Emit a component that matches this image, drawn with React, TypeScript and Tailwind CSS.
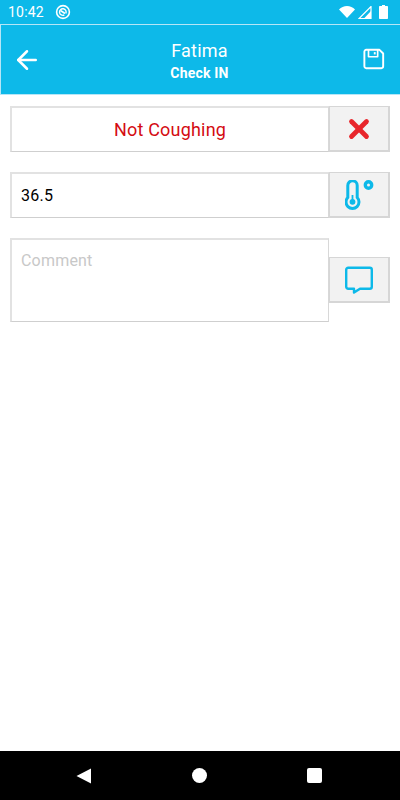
import { ArrowLeft, X } from 'lucide-react';

function ThermometerIcon() {
  return (
    <svg width="30" height="30" viewBox="0 0 30 30" fill="none" stroke="#0db9e9" strokeWidth="3" className="ml-[1px]">
      <path d="M2.800 17.500V5.500a4.700 4.700 0 0 1 9.400 0v12a6.500 6.500 0 1 1-9.400 0z" />
      <circle cx="7.500" cy="21.800" r="2.900" fill="#0db9e9" stroke="none" />
      <path d="M7.500 15v6" strokeWidth="1.800" />
      <circle cx="23.500" cy="5" r="3.200" strokeWidth="3.400" />
    </svg>
  );
}

function StatusIcons() {
  return (
    <div className="flex items-center gap-[2px]">
      <svg width="16" height="12" viewBox="0 0 16 12" fill="white">
        <path d="M0 3.400C2 1.300 5 0 8 0s6 1.300 8 3.400L8 12z" />
      </svg>
      <svg width="14" height="13" viewBox="0 0 14 13" className="ml-[1px]">
        <path d="M13 0.500V12.500H1z" fill="none" stroke="white" strokeWidth="1.200" />
        <path d="M13 5V12.500H6z" fill="white" />
      </svg>
      <svg width="9" height="14" viewBox="0 0 9 14" fill="white" className="ml-[5px]">
        <path d="M3 0h3v1h2.200a.8.8 0 0 1 .8.8v11.400a.8.8 0 0 1-.8.8H.8a.8.8 0 0 1-.8-.8V1.800a.8.8 0 0 1 .8-.8H3z" />
      </svg>
    </div>
  );
}

export default function App() {
  return (
    <div className="w-[400px] h-[800px] flex flex-col bg-white font-['Roboto',sans-serif] overflow-hidden">
      <div className="h-[24px] bg-[#0db9e9] flex items-center justify-between pl-[8px] pr-[12px] text-white">
        <div className="flex items-center gap-[11px]">
          <span className="text-[14px] leading-none tracking-[0.2px]">10:42</span>
          <svg width="16" height="16" viewBox="0 0 16 16" fill="none" stroke="white">
            <circle cx="8" cy="8" r="6.400" strokeWidth="1.600" />
            <path d="M10.800 9.500a3.300 3.300 0 1 0-1.500 1.500" strokeWidth="1.400" />
            <path d="M5.500 6.500l4.500 3" strokeWidth="1.600" />
          </svg>
        </div>
        <StatusIcons />
      </div>

      <div className="h-[71px] bg-[#0db9e9] border-t border-l border-b border-[#b5e6f7] flex items-center justify-between pl-[11px] pr-[15px]">
        <ArrowLeft size={30} color="white" strokeWidth={2} />
        <div className="flex flex-col items-center text-white pt-[2px] pr-[6px]">
          <span className="text-[18px] leading-[24px] tracking-[0.2px]">Fatima</span>
          <span className="text-[14px] leading-[20px] font-bold tracking-[0.2px]">Check IN</span>
        </div>
        <svg width="22" height="22" viewBox="0 0 24 24" fill="none" stroke="white" strokeWidth="2.100" strokeLinejoin="round" className="mb-[1px]">
          <path d="M3.500 2h14.500l4 4v14a2 2 0 0 1-2 2H3.500a2 2 0 0 1-2-2V4a2 2 0 0 1 2-2z" />
          <path d="M6 2v7.500h10V2" strokeWidth="1.800" />
          <path d="M12.800 4.500v2.500" strokeWidth="2" />
        </svg>
      </div>

      <div className="flex-1 flex flex-col gap-[20px] pt-[11px] pl-[10px] pr-[10px]">
        <div className="flex h-[46px]">
          <div className="w-[319px] border-t-2 border-l-2 border-r border-b border-t-[#e2e2e2] border-l-[#e2e2e2] border-r-[#d8d8d8] border-b-[#cfcfcf] flex items-center justify-center text-[18px] tracking-[0.2px] text-[#d40c12]">
            Not Coughing
          </div>
          <div className="w-[61px] bg-[#f2f2f2] border-t border-l border-b-2 border-r-2 border-[#d6d6d6] flex items-center justify-center">
            <X size={30} color="#e8262c" strokeWidth={3.800} />
          </div>
        </div>

        <div className="flex h-[46px]">
          <div className="w-[319px] border-t-2 border-l-2 border-r border-b border-t-[#e2e2e2] border-l-[#e2e2e2] border-r-[#d8d8d8] border-b-[#cfcfcf] flex items-center pl-[9px] pt-[1px] text-[16px] tracking-[0.3px] text-black">
            36.5
          </div>
          <div className="w-[61px] bg-[#f2f2f2] border-t border-l border-b-2 border-r-2 border-[#d6d6d6] flex items-center justify-center">
            <ThermometerIcon />
          </div>
        </div>

        <div className="flex h-[84px] items-center">
          <div className="w-[319px] h-full border-t-2 border-l-2 border-r border-b border-t-[#e2e2e2] border-l-[#e2e2e2] border-r-[#d8d8d8] border-b-[#cfcfcf] pl-[9px] pt-[11px] text-[16px] leading-[20px] tracking-[0.2px] text-[#c8c8c8]">
            Comment
          </div>
          <div className="w-[61px] h-[46px] bg-[#f2f2f2] border-t border-l border-b-2 border-r-2 border-[#d6d6d6] flex items-center justify-center">
            <svg width="28" height="28" viewBox="0 0 28 28" fill="none" stroke="#0db9e9" strokeWidth="2.400" strokeLinejoin="round">
              <path d="M3.200 1.800h21.600a2 2 0 0 1 2 2v17a2 2 0 0 1-2 2H15l-6 3.800v-3.800H3.200a2 2 0 0 1-2-2v-17a2 2 0 0 1 2-2z" />
            </svg>
          </div>
        </div>
      </div>

      <div className="h-[49px] bg-black flex items-center justify-center gap-[100px] pr-[3px]">
        <svg width="16" height="16" viewBox="0 0 16 16" fill="white">
          <path d="M15 0.500V15.500L0.500 8z" />
        </svg>
        <div className="w-[15px] h-[15px] rounded-full bg-white" />
        <div className="w-[15px] h-[15px] rounded-[2px] bg-white" />
      </div>
    </div>
  );
}
